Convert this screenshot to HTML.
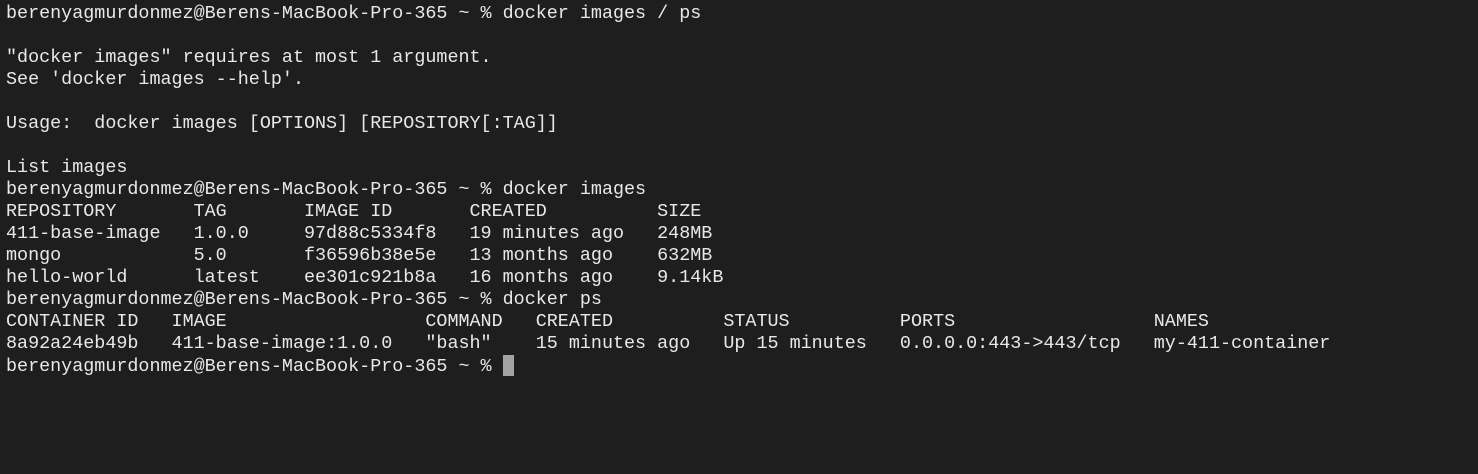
<!DOCTYPE html>
<html><head><style>
html,body{margin:0;padding:0;background:#1e1e1e;width:1478px;height:474px;overflow:hidden}
pre{position:absolute;left:6px;top:3px;margin:0;font-family:"Liberation Mono",monospace;font-size:18.4px;line-height:22px;color:#e8e8e8;letter-spacing:0}
.c{display:inline-block;width:11px;height:21px;background:#a3a3a3;vertical-align:-5px}
</style></head><body><pre>berenyagmurdonmez@Berens-MacBook-Pro-365 ~ % docker images / ps

"docker images" requires at most 1 argument.
See 'docker images --help'.

Usage:  docker images [OPTIONS] [REPOSITORY[:TAG]]

List images
berenyagmurdonmez@Berens-MacBook-Pro-365 ~ % docker images
REPOSITORY       TAG       IMAGE ID       CREATED          SIZE
411-base-image   1.0.0     97d88c5334f8   19 minutes ago   248MB
mongo            5.0       f36596b38e5e   13 months ago    632MB
hello-world      latest    ee301c921b8a   16 months ago    9.14kB
berenyagmurdonmez@Berens-MacBook-Pro-365 ~ % docker ps
CONTAINER ID   IMAGE                  COMMAND   CREATED          STATUS          PORTS                  NAMES
8a92a24eb49b   411-base-image:1.0.0   "bash"    15 minutes ago   Up 15 minutes   0.0.0.0:443-&gt;443/tcp   my-411-container
berenyagmurdonmez@Berens-MacBook-Pro-365 ~ % <span class="c"></span></pre></body></html>
